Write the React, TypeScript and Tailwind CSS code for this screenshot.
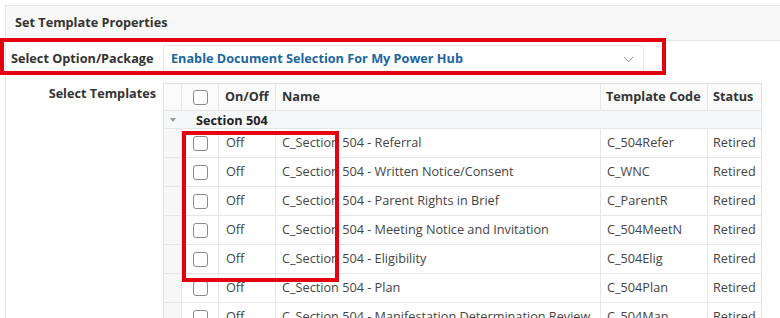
import { ChevronDown } from "lucide-react";

const rows = [
  { name: "C_Section 504 - Referral", code: "C_504Refer" },
  { name: "C_Section 504 - Written Notice/Consent", code: "C_WNC" },
  { name: "C_Section 504 - Parent Rights in Brief", code: "C_ParentR" },
  { name: "C_Section 504 - Meeting Notice and Invitation", code: "C_504MeetN" },
  { name: "C_Section 504 - Eligibility", code: "C_504Elig" },
  { name: "C_Section 504 - Plan", code: "C_504Plan" },
  { name: "C_Section 504 - Manifestation Determination Review", code: "C_504Man" },
];

function Box() {
  return <span className="block w-[15px] h-[15px] rounded-[3px] border border-[#8a8a8a] bg-white" />;
}

export default function App() {
  return (
    <div className="relative w-[780px] h-[318px] overflow-hidden bg-white text-[#333] font-['Open_Sans',sans-serif] text-[12.7px]">
      <div className="mt-[5px] ml-[5px] border-t border-l border-[#e6e6e6]">
        <div className="h-[35px] bg-[#f8f8f8] border-b border-[#e6e6e6] flex items-center pl-[9px] font-bold text-[#333]">
          Set Template Properties
        </div>

        <div className="flex pt-[4px]">
          <div className="w-[157px] pl-[5px] pt-[4px] font-bold leading-[18px]">Select Option/Package</div>
          <div className="w-[481px] h-[28px] border border-[#e8e8e8] rounded-[2px] flex items-center justify-between pl-[7px] pr-[6px]">
            <span className="font-bold text-[#1a66a0]">Enable Document Selection For My Power Hub</span>
            <ChevronDown size={17} strokeWidth={1.3} className="text-[#777]" />
          </div>
        </div>

        <div className="flex pt-[10px]">
          <div className="w-[150px] text-right pt-[1px] font-bold leading-[18px]">Select Templates</div>
          <div className="ml-[7px] w-[599px] border-t border-l border-r border-[#e2e2e2]">
            <div className="flex h-[27px] bg-[#fafafa] border-b border-[#e6e6e6] font-bold">
              <div className="w-[18px] border-r border-[#e6e6e6]" />
              <div className="w-[37px] border-r border-[#e6e6e6] flex items-center justify-center">
                <Box />
              </div>
              <div className="w-[57px] border-r border-[#e6e6e6] flex items-center pl-[6px]">On/Off</div>
              <div className="w-[325px] border-r border-[#e6e6e6] flex items-center pl-[6px]">Name</div>
              <div className="w-[107px] border-r border-[#e6e6e6] flex items-center pl-[5px]">Template Code</div>
              <div className="flex-1 flex items-center pl-[5px]">Status</div>
            </div>
            <div className="flex h-[18px] bg-[#f5f7f9] border-b border-[#e6e6e6]">
              <div className="w-[18px] flex items-center justify-center">
                <span className="block w-0 h-0 border-l-[3px] border-r-[3px] border-t-[4px] border-l-transparent border-r-transparent border-t-[#999]" />
              </div>
              <div className="pl-[14px] font-bold leading-[18px] text-[#222]">Section 504</div>
            </div>
            {rows.map((r) => (
              <div key={r.code} className="flex h-[29px] border-b border-[#e6e6e6] bg-white text-[#444]">
                <div className="w-[18px] bg-[#f7f7f7] border-r border-[#e6e6e6]" />
                <div className="w-[37px] border-r border-[#e6e6e6] flex items-center justify-center">
                  <Box />
                </div>
                <div className="w-[57px] border-r border-[#e6e6e6] flex items-center pl-[7px]">Off</div>
                <div className="w-[325px] border-r border-[#e6e6e6] flex items-center pl-[6px] whitespace-nowrap overflow-hidden">{r.name}</div>
                <div className="w-[107px] border-r border-[#e6e6e6] flex items-center pl-[6px]">{r.code}</div>
                <div className="flex-1 flex items-center pl-[5px]">Retired</div>
              </div>
            ))}
          </div>
        </div>
      </div>

      <div className="absolute left-0 top-[38px] w-[666px] h-[37px] border-[4px] border-[#e3000f]" />
      <div className="absolute left-[182px] top-[131px] w-[157px] h-[151px] border-[4px] border-[#e3000f]" />
    </div>
  );
}
